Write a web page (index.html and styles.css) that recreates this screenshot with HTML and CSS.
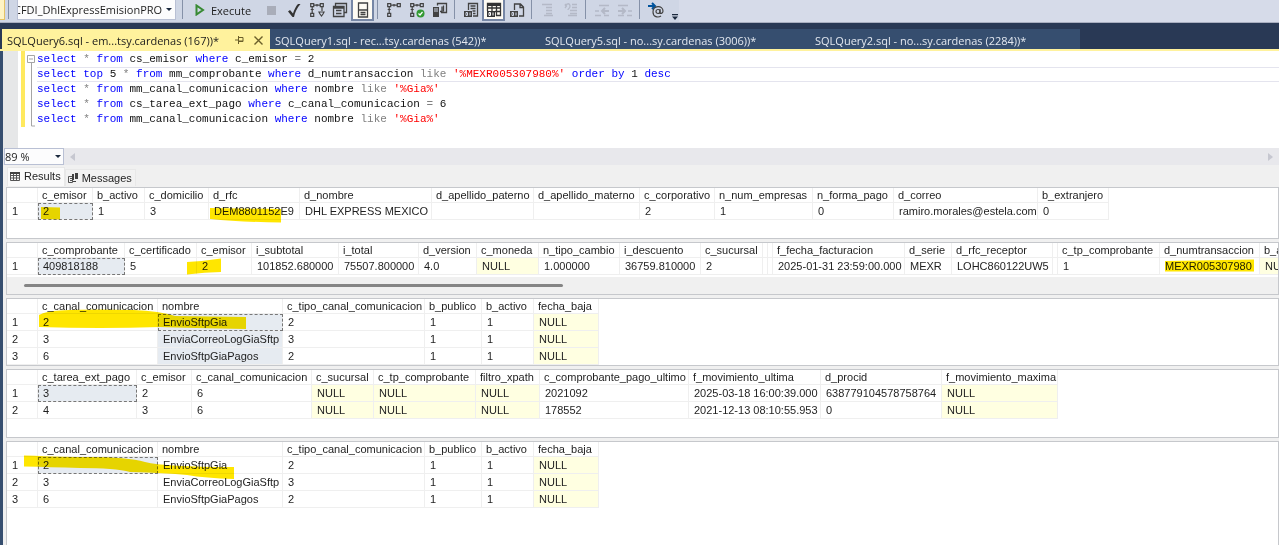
FILE: index.html
```html
<!DOCTYPE html>
<html lang="es">
<head>
    <meta charset="utf-8" />
    <meta name="viewport" content="width=device-width, initial-scale=1.0" />
    <title>SQLQuery6.sql</title>
    <link rel="stylesheet" href="styles.css">
</head>
<body>
    <div class="window">
        <div class="toolbar">
            <div class="tools">
                <span class="edge"></span>
                <span class="sep"></span>
                <div class="select-box database">
                    <select aria-label="Database">
                        <option>CFDI_DhlExpressEmisionPROD</option>
                    </select>
                </div>
                <span class="sep"></span>
                <button class="execute">
                    <svg width="10" height="12" viewBox="0 0 10 12"><path d="M1.5 1.5v9l6.500-4.500z" fill="none" stroke="#388a34" stroke-width="2"/></svg>
                    Execute
                </button>
                <button class="tool" aria-label="Stop">
                    <svg viewBox="0 0 16 16"><path d="M4 4h9v9H4z" fill="#a9adb9"/></svg>
                </button>
                <button class="tool" aria-label="Parse">
                    <svg viewBox="0 0 16 16"><path d="M2 9.500l2-1.500 3 3.500C8 8 10 4 12 2h2.500C11 6 9 10 8 15H6.500z" fill="#333"/></svg>
                </button>
                <button class="tool" aria-label="Estimated plan">
                    <svg viewBox="0 0 16 16" fill="none" stroke="#424242" stroke-width="1.200"><path d="M1.700 1.700h3v3h-3zM11.300 1.700h3v3h-3zM1.700 11.300h3v3h-3zM1.700 7.500h3M5 3.200h6M3.200 5v6M13 5v4M8 2v2.500"/><path d="M10 10h5l-1 2-1.500 2-1.500-2z"/></svg>
                </button>
                <button class="tool" aria-label="Query options">
                    <svg viewBox="0 0 16 16" fill="none" stroke="#424242" stroke-width="1.300"><path d="M3.500 4V1.500h11v9H12M1.500 4.500h10.500v10H1.500zM1.500 6h10.500M4 8.500h5.500M4 11.500h5.500"/></svg>
                </button>
                <button class="tool pressed" aria-label="IntelliSense">
                    <svg viewBox="0 0 16 16" fill="none" stroke="#424242" stroke-width="1.300"><path d="M3.500 1h9v14h-9zM3.500 8h9M5.500 10.500h5M5.500 12.500h5"/></svg>
                </button>
                <span class="sep"></span>
                <button class="tool" aria-label="Actual plan">
                    <svg viewBox="0 0 16 16" fill="none" stroke="#424242" stroke-width="1.200"><path d="M1.700 1.700h3v3h-3zM11.300 1.700h3v3h-3zM1.700 11.300h3v3h-3zM1.700 7.500h3M5 3.200h6M3.200 5v6M8 2v2.500"/></svg>
                </button>
                <button class="tool" aria-label="Live statistics">
                    <svg viewBox="0 0 16 16" fill="none" stroke="#424242" stroke-width="1.200"><path d="M1.700 1.700h3v3h-3zM11.300 1.700h3v3h-3zM1.700 11.300h3v3h-3zM1.700 7.500h3M5 3.200h6M3.200 5v6M8 2v2.500"/><circle cx="11.500" cy="11.500" r="4" fill="#339933" stroke="none"/><path d="M9.500 11.500l1.500 1.500 2.500-3" stroke="#fff"/></svg>
                </button>
                <button class="tool" aria-label="Client statistics">
                    <svg viewBox="0 0 16 16"><path d="M1 5h6v10H1z" fill="#424242"/><path d="M2 7h4M2 9h4" stroke="#cfd6e5"/><path d="M5.500 3.500v-2h9v9H9M8 9.500h2v-5M11.500 9.500V3.500" fill="none" stroke="#424242" stroke-width="1.300"/></svg>
                </button>
                <span class="sep"></span>
                <button class="tool" aria-label="Results to text">
                    <svg viewBox="0 0 16 16"><path d="M5.500 8V1.500h9v12.500H10M7.500 4h5M7.500 6.500h5M9.500 9h3M10 11.500h2.500" fill="none" stroke="#424242" stroke-width="1.300"/><path d="M1 9h8v6H1z" fill="#424242"/><path d="M3 10.500h1.500v3H3zM7 10.500v3" fill="none" stroke="#cfd6e5"/></svg>
                </button>
                <button class="tool pressed" aria-label="Results to grid">
                    <svg viewBox="0 0 16 16"><path d="M1.500 9V1.500h13v12H10M1.500 6h13M9 9.500h5.500M6 4v5M10.500 4v10" fill="none" stroke="#333" stroke-width="1.300"/><path d="M1 1h14v3H1zM1 9h8v6H1z" fill="#333"/><path d="M3 10.500h1.500v3H3zM7 10.500v3" fill="none" stroke="#fff"/></svg>
                </button>
                <button class="tool" aria-label="Results to file">
                    <svg viewBox="0 0 16 16"><path d="M5.500 8V2h6l3 3v9H10M11 2v3.500h3.500" fill="none" stroke="#424242" stroke-width="1.300"/><path d="M1 9h8v6H1z" fill="#424242"/><path d="M3 10.500h1.500v3H3zM7 10.500v3" fill="none" stroke="#cfd6e5"/></svg>
                </button>
                <span class="sep"></span>
                <button class="tool" aria-label="Comment" disabled>
                    <svg viewBox="0 0 16 16"><path d="M2 2.500h10M6 5.500h6M6 8.500h6M6 11.500h6M4 13.500h9" fill="none" stroke="#b4b9c7" stroke-width="1.300"/></svg>
                </button>
                <button class="tool" aria-label="Uncomment" disabled>
                    <svg viewBox="0 0 16 16"><path d="M2 2l1.500 2L2 6M2 4c2-3 5-3 5 0s-2 2-2 4M9 2.500h5M9 5.500h5M7 8.500h7M7 11.500h7M5 13.500h9" fill="none" stroke="#b4b9c7" stroke-width="1.300"/></svg>
                </button>
                <span class="sep"></span>
                <button class="tool" aria-label="Decrease indent" disabled>
                    <svg viewBox="0 0 16 16"><path d="M5 3.500h10M1 13.500h6M10 13.500h5M1 9h4" stroke="#b4b9c7" stroke-width="1.500"/><path d="M15 9H8M11 6L8 9l3 3" fill="none" stroke="#b4b9c7" stroke-width="2"/></svg>
                </button>
                <button class="tool" aria-label="Increase indent" disabled>
                    <svg viewBox="0 0 16 16"><path d="M1 3.500h10M1 13.500h6M10 13.500h5M11 9h4" stroke="#b4b9c7" stroke-width="1.500"/><path d="M1 9h7M5 6l3 3-3 3" fill="none" stroke="#b4b9c7" stroke-width="2"/></svg>
                </button>
                <span class="sep"></span>
                <button class="tool" aria-label="Template parameters">
                    <svg viewBox="0 0 16 16" fill="none"><path d="M0 4h6M4 1l3 3-3 3" stroke="#00539c" stroke-width="2"/><circle cx="10" cy="9.500" r="2" stroke="#424242" stroke-width="1.200"/><path d="M12 7v4c1 1 3 0 3-2 0-6-10-6-10 1 0 5 5 6 8 4" stroke="#424242" stroke-width="1.200"/></svg>
                </button>
                <button class="overflow" aria-label="Toolbar options">
                    <svg width="8" height="6" viewBox="0 0 8 6"><path d="M1 0h6v1.300H1zM1 2.500h6L4 6z" fill="#1b293e"/></svg>
                </button>
            </div>
        </div>

        <div class="tabs" role="tablist">
            <div class="tab active">
                <button class="tab-name" role="tab" aria-selected="true">SQLQuery6.sql - em...tsy.cardenas (167))*</button>
                <button class="tab-icon" aria-label="Pin">
                    <svg width="10" height="8" viewBox="0 0 10 8"><path d="M0 4h3M3.500 0v8M3.500 1.500H8v4H3.500M3.500 5H8" fill="none" stroke="#6b5f2a"/></svg>
                </button>
                <button class="tab-icon" aria-label="Close">
                    <svg width="9" height="9" viewBox="0 0 9 9"><path d="M0.500 0.500l8 8M8.500 0.500l-8 8" stroke="#6b5f2a" stroke-width="1.400"/></svg>
                </button>
            </div>
            <div class="tab"><button class="tab-name" role="tab">SQLQuery1.sql - rec...tsy.cardenas (542))*</button></div>
            <div class="tab"><button class="tab-name" role="tab">SQLQuery5.sql - no...sy.cardenas (3006))*</button></div>
            <div class="tab"><button class="tab-name" role="tab">SQLQuery2.sql - no...sy.cardenas (2284))*</button></div>
        </div>

        <div class="document">
            <div class="editor">
                <div class="margin"></div>
                <div class="changes"></div>
                <div class="fold">
                    <svg width="10" height="76" viewBox="0 0 10 76"><path d="M1.500 4.500h7v7h-7zM3 8h4M5.500 12v63H9" fill="none" stroke="#a5a5a5"/></svg>
                </div>
                <div class="code">
                    <div class="line"><b>select</b> <i>*</i> <b>from</b> cs_emisor <b>where</b> c_emisor <i>=</i> 2</div>
                    <div class="line current"><b>select</b> <b>top</b> 5 <i>*</i> <b>from</b> mm_comprobante <b>where</b> d_numtransaccion <i>like</i> <s>'%MEXR005307980%'</s> <b>order</b> <b>by</b> 1 <b>desc</b></div>
                    <div class="line"><b>select</b> <i>*</i> <b>from</b> mm_canal_comunicacion <b>where</b> nombre <i>like</i> <s>'%Gia%'</s></div>
                    <div class="line"><b>select</b> <i>*</i> <b>from</b> cs_tarea_ext_pago <b>where</b> c_canal_comunicacion <i>=</i> 6</div>
                    <div class="line"><b>select</b> <i>*</i> <b>from</b> mm_canal_comunicacion <b>where</b> nombre <i>like</i> <s>'%Gia%'</s></div>
                </div>
            </div>

            <div class="editor-bar">
                <div class="select-box zoom">
                    <select aria-label="Zoom">
                        <option>89 %</option>
                    </select>
                </div>
                <div class="hscroll"><span class="arrow-left"></span><span class="arrow-right"></span></div>
            </div>

            <div class="result-tabs" role="tablist">
                <button class="result-tab selected" role="tab" aria-selected="true">
                    <svg width="10" height="9" viewBox="0 0 10 9"><path d="M0.500 0.500h9v8h-9zM0 3.500h10M0 6h10M3.500 1v8M6.500 1v8" fill="none" stroke="#555"/><path d="M0 0h10v2H0z" fill="#424242"/></svg>
                    Results
                </button>
                <button class="result-tab" role="tab">
                    <svg width="10" height="10" viewBox="0 0 10 10"><path d="M0.500 3.500h4v6h-4zM2 5.500h2M2 7.500h2" fill="none" stroke="#555"/><path d="M4 1h2v6H4zM7 0h3v6H7zM5 8h3v1H5z" fill="#424242"/></svg>
                    Messages
                </button>
            </div>

            <div class="results">
                <div class="pane pane-emisor">
                    <table>
                        <colgroup><col class="row-number"><col class="c-emisor"><col class="b-activo"><col class="c-domicilio"><col class="d-rfc"><col class="d-nombre"><col class="d-apellido-paterno"><col class="d-apellido-materno"><col class="c-corporativo"><col class="n-num-empresas"><col class="n-forma-pago"><col class="d-correo"><col class="b-extranjero"></colgroup>
                        <thead>
                            <tr><th></th><th>c_emisor</th><th>b_activo</th><th>c_domicilio</th><th>d_rfc</th><th>d_nombre</th><th>d_apellido_paterno</th><th>d_apellido_materno</th><th>c_corporativo</th><th>n_num_empresas</th><th>n_forma_pago</th><th>d_correo</th><th>b_extranjero</th></tr>
                        </thead>
                        <tbody>
                            <tr><th>1</th><td class="selected focus">2</td><td>1</td><td>3</td><td>DEM8801152E9</td><td>DHL EXPRESS MEXICO</td><td></td><td></td><td>2</td><td>1</td><td>0</td><td>ramiro.morales@estela.com</td><td>0</td></tr>
                        </tbody>
                    </table>
                </div>

                <div class="pane pane-comprobante">
                    <table>
                        <colgroup><col class="row-number"><col class="c-comprobante"><col class="c-certificado"><col class="c-emisor"><col class="i-subtotal"><col class="i-total"><col class="d-version"><col class="c-moneda"><col class="n-tipo-cambio"><col class="i-descuento"><col class="c-sucursal"><col class="collapsed"><col class="collapsed"><col class="f-fecha"><col class="d-serie"><col class="d-rfc-receptor"><col class="collapsed"><col class="c-tp-comprobante"><col class="d-numtransaccion"><col class="b-activo"></colgroup>
                        <thead>
                            <tr><th></th><th>c_comprobante</th><th>c_certificado</th><th>c_emisor</th><th>i_subtotal</th><th>i_total</th><th>d_version</th><th>c_moneda</th><th>n_tipo_cambio</th><th>i_descuento</th><th>c_sucursal</th><th></th><th></th><th>f_fecha_facturacion</th><th>d_serie</th><th>d_rfc_receptor</th><th></th><th>c_tp_comprobante</th><th>d_numtransaccion</th><th>b_activo</th></tr>
                        </thead>
                        <tbody>
                            <tr><th>1</th><td class="selected focus">409818188</td><td>5</td><td>2</td><td>101852.680000</td><td>75507.800000</td><td>4.0</td><td class="null">NULL</td><td>1.000000</td><td>36759.810000</td><td>2</td><td></td><td></td><td>2025-01-31 23:59:00.000</td><td>MEXR</td><td>LOHC860122UW5</td><td></td><td>1</td><td>MEXR005307980</td><td class="null">NULL</td></tr>
                        </tbody>
                    </table>
                    <div class="grid-scroll"><div class="thumb"></div></div>
                </div>

                <div class="pane pane-canal">
                    <table>
                        <colgroup><col class="row-number"><col class="c-canal"><col class="nombre"><col class="c-tipo-canal"><col class="b-publico"><col class="b-activo"><col class="fecha-baja"></colgroup>
                        <thead>
                            <tr><th></th><th>c_canal_comunicacion</th><th>nombre</th><th>c_tipo_canal_comunicacion</th><th>b_publico</th><th>b_activo</th><th>fecha_baja</th></tr>
                        </thead>
                        <tbody>
                            <tr><th>1</th><td>2</td><td class="selected focus">EnvioSftpGia</td><td>2</td><td>1</td><td>1</td><td class="null">NULL</td></tr>
                            <tr><th>2</th><td>3</td><td class="selected">EnviaCorreoLogGiaSftp</td><td>3</td><td>1</td><td>1</td><td class="null">NULL</td></tr>
                            <tr><th>3</th><td>6</td><td class="selected">EnvioSftpGiaPagos</td><td>2</td><td>1</td><td>1</td><td class="null">NULL</td></tr>
                        </tbody>
                    </table>
                </div>

                <div class="pane pane-tarea">
                    <table>
                        <colgroup><col class="row-number"><col class="c-tarea"><col class="c-emisor"><col class="c-canal"><col class="c-sucursal"><col class="c-tp-comprobante"><col class="filtro-xpath"><col class="c-pago-ultimo"><col class="f-fecha"><col class="d-procid"><col class="f-maxima"></colgroup>
                        <thead>
                            <tr><th></th><th>c_tarea_ext_pago</th><th>c_emisor</th><th>c_canal_comunicacion</th><th>c_sucursal</th><th>c_tp_comprobante</th><th>filtro_xpath</th><th>c_comprobante_pago_ultimo</th><th>f_movimiento_ultima</th><th>d_procid</th><th>f_movimiento_maxima</th></tr>
                        </thead>
                        <tbody>
                            <tr><th>1</th><td class="selected focus">3</td><td>2</td><td>6</td><td class="null">NULL</td><td class="null">NULL</td><td class="null">NULL</td><td>2021092</td><td>2025-03-18 16:00:39.000</td><td>638779104578758764</td><td class="null">NULL</td></tr>
                            <tr><th>2</th><td>4</td><td>3</td><td>6</td><td class="null">NULL</td><td class="null">NULL</td><td class="null">NULL</td><td>178552</td><td>2021-12-13 08:10:55.953</td><td>0</td><td class="null">NULL</td></tr>
                        </tbody>
                    </table>
                </div>

                <div class="pane pane-last">
                    <table>
                        <colgroup><col class="row-number"><col class="c-canal"><col class="nombre"><col class="c-tipo-canal"><col class="b-publico"><col class="b-activo"><col class="fecha-baja"></colgroup>
                        <thead>
                            <tr><th></th><th>c_canal_comunicacion</th><th>nombre</th><th>c_tipo_canal_comunicacion</th><th>b_publico</th><th>b_activo</th><th>fecha_baja</th></tr>
                        </thead>
                        <tbody>
                            <tr><th>1</th><td class="selected focus">2</td><td>EnvioSftpGia</td><td>2</td><td>1</td><td>1</td><td class="null">NULL</td></tr>
                            <tr><th>2</th><td>3</td><td>EnviaCorreoLogGiaSftp</td><td>3</td><td>1</td><td>1</td><td class="null">NULL</td></tr>
                            <tr><th>3</th><td>6</td><td>EnvioSftpGiaPagos</td><td>2</td><td>1</td><td>1</td><td class="null">NULL</td></tr>
                        </tbody>
                    </table>
                </div>
            </div>
        </div>

        <!-- highlighter strokes -->
        <svg class="marker" aria-hidden="true">
            <path d="M41 207L60 207.500V219.500L41 219z"/>
            <path d="M210 208L281 209V222.500Q240 222 210 219z"/>
            <path d="M187 262Q205 261 221 258.500V272Q205 272 187 274.500z"/>
            <path d="M1165 261L1254 259.500V271.500H1165z"/>
            <path d="M39 315Q46 311 60 310.500Q90 309 133 310Q160 311 175 316L246 317V329Q190 328 160 327Q100 329 39 327z"/>
            <path d="M24 455.500Q67 457 90 457Q127 457 145 462Q165 467 234 467V479Q205 478 187 475Q165 473 130 472Q115 468 80 468Q50 467 24 466.500z"/>
        </svg>
    </div>
</body>
</html>
```

FILE: styles.css
```css
* {
    box-sizing: border-box;
}

body {
    margin: 0;
    font-family: "Liberation Sans", Arial, sans-serif;
    font-size: 11px;
    color: #1e1e1e;
    background: #293955;
}

button, select {
    margin: 0;
    padding: 0;
    border: none;
    background: none;
    font: inherit;
    color: inherit;
}

.window {
    position: relative;
    display: flex;
    flex-direction: column;
    min-height: 100vh;
    overflow: hidden;
}

/* toolbar */
.toolbar {
    height: 23px;
    background: #d6dbe9;
    border-bottom: 1px solid #a9afc0;
    font-family: "Open Sans", "Noto Sans", sans-serif;
}

.tools {
    display: inline-flex;
    align-items: flex-start;
    height: 22px;
    background: #cfd6e5;
}

.edge {
    width: 5px;
    height: 20px;
    background: #fff4c4;
    border: solid #e5c365;
    border-width: 0 1px 1px 0;
}

.sep {
    width: 1px;
    height: 19px;
    margin: 0 4px 0 3px;
    background: #8591a8;
}

.select-box {
    position: relative;
    background: #fcfcfd;
    border: 1px solid #b9c0d4;
}

.select-box::after {
    content: "";
    position: absolute;
    right: 3px;
    top: 8px;
    border: 3px solid transparent;
    border-top-color: #1b293e;
    pointer-events: none;
}

.select-box select {
    display: block;
    width: 100%;
    height: 100%;
    appearance: none;
    outline: none;
}

.database {
    width: 159px;
    height: 20px;
    margin: 0 3px 0 4px;
    padding-right: 13px;
    border-top: none;
}

.database select {
    text-indent: -4px;
}

.execute {
    display: flex;
    align-items: center;
    gap: 6px;
    width: 72px;
    height: 20px;
    padding-left: 8px;
}

.tool {
    display: flex;
    justify-content: center;
    align-items: center;
    width: 23px;
    height: 20px;
}

.tool svg {
    width: 16px;
    height: 16px;
}

.pressed {
    height: 21px;
    background: #fffcf4;
    border: 2px solid #7787a6;
    border-top: none;
}

.overflow {
    align-self: flex-end;
    width: 12px;
    height: 12px;
    padding-left: 3px;
    line-height: 6px;
}

/* document tabs */
.tabs {
    display: flex;
    padding: 6px 0 0 2px;
    background: #293955;
    border-bottom: 2px solid #fff29d;
    font-family: "Open Sans", "Noto Sans", sans-serif;
}

.tab {
    display: flex;
    align-items: center;
    width: 270px;
    height: 20px;
    padding: 2px 5px 0;
    background: #364e6f;
    color: #e3e8f0;
}

.tab.active {
    width: 268px;
    padding-right: 3px;
    background: #fff29d;
    color: #1b1b1b;
}

.tab-name {
    flex: 1;
    text-align: left;
    white-space: nowrap;
}

.tab-icon {
    display: flex;
    justify-content: center;
    width: 18px;
}

/* editor */
.document {
    flex: 1;
    display: flex;
    flex-direction: column;
    background: #f0f0f0;
    border-left: 3px solid #364e6f;
}

.editor {
    display: flex;
    height: 97px;
    background: #fff;
}

.margin {
    width: 15px;
    margin-right: 3px;
    background: #e6e7e8;
}

.changes {
    width: 4px;
    height: 76px;
    background: #ffe95e;
}

.fold {
    width: 12px;
    padding-left: 1px;
}

.code {
    flex: 1;
    padding-top: 1px;
    font-family: "Liberation Mono", "Courier New", monospace;
    line-height: 15px;
    color: #111;
}

.line {
    white-space: pre;
}

.line.current {
    box-shadow: inset 0 1px #e4e4ee, inset 0 -1px #e4e4ee;
}

.code b {
    font-weight: normal;
    color: #0000ff;
}

.code i {
    font-style: normal;
    color: #808080;
}

.code s {
    text-decoration: none;
    color: #ff0000;
}

.editor-bar {
    display: flex;
    height: 17px;
    padding-left: 1px;
    background: #e8e8ec;
}

.zoom {
    width: 60px;
    font-family: "Open Sans", "Noto Sans", sans-serif;
}

.zoom::after {
    top: 6px;
    right: 2px;
}

.hscroll {
    flex: 1;
    display: flex;
    justify-content: space-between;
    align-items: center;
    padding: 0 6px;
}

.arrow-left,
.arrow-right {
    border: solid transparent;
    border-width: 4px 5px;
}

.arrow-left {
    border-left: none;
    border-right-color: #c6c7d0;
}

.arrow-right {
    border-right: none;
    border-left-color: #c6c7d0;
}

/* results */
.result-tabs {
    display: flex;
    align-items: flex-end;
    height: 22px;
    padding: 0 0 1px 4px;
}

.result-tab {
    display: flex;
    align-items: center;
    gap: 4px;
    height: 17px;
    padding: 0 3px 0 2px;
    border: 1px solid #e8e8e8;
    border-bottom: none;
    background: #f2f2f2;
}

.result-tab.selected {
    height: 19px;
    padding-bottom: 2px;
    background: #fafafa;
}

.results {
    flex: 1;
    display: flex;
    flex-direction: column;
    gap: 3px;
    padding-left: 3px;
}

.pane {
    display: flex;
    flex-direction: column;
    justify-content: space-between;
    align-items: flex-start;
    background: #fff;
    border: 1px solid #c6c8cc;
    overflow: hidden;
}

.pane-emisor { height: 52px; }
.pane-comprobante { height: 53px; }
.pane-canal { height: 68px; }
.pane-tarea { height: 69px; }

.pane-last {
    flex: 1;
    border-bottom: none;
}

.grid-scroll {
    align-self: stretch;
    height: 17px;
    padding: 7px 0 0 17px;
    background: #f0f0f0;
}

.thumb {
    width: 43%;
    height: 3px;
    border-radius: 2px;
    background: #858585;
}

table {
    flex: none;
    width: 0;
    table-layout: fixed;
    border-spacing: 0;
    line-height: 13px;
}

th, td {
    height: 17px;
    padding: 1px 0 0 5px;
    border: solid #efefef;
    border-width: 0 1px 1px 0;
    font-weight: normal;
    text-align: left;
    white-space: nowrap;
    overflow: hidden;
}

thead th {
    height: 15px;
    padding-left: 4px;
}

.null {
    background: #ffffe1;
}

.selected {
    background: #e6ebf1;
}

.focus {
    outline: 1px dashed #777;
    outline-offset: -1px;
}

/* column widths */
.row-number { width: 31px; }
.collapsed { width: 5px; }
.c-emisor { width: 55px; }
.b-activo { width: 52px; }
.c-domicilio { width: 64px; }
.d-rfc { width: 91px; }
.d-nombre { width: 132px; }
.d-apellido-paterno { width: 102px; }
.d-apellido-materno { width: 106px; }
.c-corporativo { width: 75px; }
.n-num-empresas { width: 98px; }
.n-forma-pago { width: 81px; }
.d-correo { width: 144px; }
.b-extranjero { width: 71px; }
.c-comprobante { width: 87px; }
.c-certificado { width: 72px; }
.i-subtotal { width: 87px; }
.i-total { width: 80px; }
.d-version { width: 58px; }
.c-moneda { width: 62px; }
.n-tipo-cambio { width: 81px; }
.i-descuento { width: 81px; }
.c-sucursal { width: 62px; }
.f-fecha { width: 132px; }
.d-serie { width: 47px; }
.d-rfc-receptor { width: 101px; }
.c-tp-comprobante { width: 102px; }
.d-numtransaccion { width: 100px; }
.c-canal { width: 120px; }
.nombre { width: 125px; }
.c-tipo-canal { width: 142px; }
.b-publico { width: 57px; }
.fecha-baja { width: 65px; }
.c-tarea { width: 99px; }
.filtro-xpath { width: 64px; }
.c-pago-ultimo { width: 149px; }
.d-procid { width: 121px; }
.f-maxima { width: 116px; }

.marker {
    position: absolute;
    top: 0;
    left: 0;
    width: 100%;
    height: 100%;
    fill: #ffe600;
    mix-blend-mode: multiply;
    pointer-events: none;
}
```
